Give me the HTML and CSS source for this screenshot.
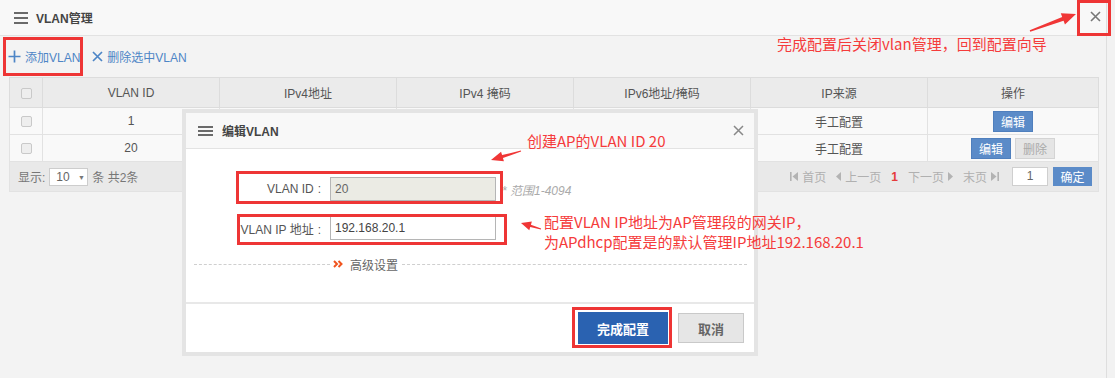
FILE: index.html
```html
<!DOCTYPE html>
<html lang="zh-CN">
<head>
    <meta charset="UTF-8">
    <title>VLAN管理</title>
    <link rel="stylesheet" href="styles.css">
</head>
<body>
    <div class="page">
        <div class="panel">
            <div class="panel-head">
                <span class="menu-icon"><i></i><i></i><i></i></span>
                <span class="panel-title">VLAN管理</span>
                <svg class="panel-close" width="11" height="11" viewBox="0 0 11 11"><path d="M1 1L10 10M10 1L1 10" stroke="#777" stroke-width="1.6"/></svg>
            </div>

            <div class="toolbar">
                <a class="tool-link">
                    <svg width="13" height="13" viewBox="0 0 13 13"><path d="M6.5 0.5V12.5M0.5 6.5H12.5" stroke="#4d85c6" stroke-width="1.7"/></svg>
                    添加VLAN
                </a>
                <a class="tool-link">
                    <svg width="11" height="11" viewBox="0 0 11 11"><path d="M1 1L10 10M10 1L1 10" stroke="#4d85c6" stroke-width="1.7"/></svg>
                    删除选中VLAN
                </a>
            </div>

            <table class="grid">
                <colgroup>
                    <col style="width:33px"><col style="width:177px"><col style="width:177px"><col style="width:177px">
                    <col style="width:177px"><col style="width:177px"><col style="width:171px">
                </colgroup>
                <thead>
                    <tr>
                        <th><span class="check"></span></th>
                        <th>VLAN ID</th>
                        <th>IPv4地址</th>
                        <th>IPv4 掩码</th>
                        <th>IPv6地址/掩码</th>
                        <th>IP来源</th>
                        <th>操作</th>
                    </tr>
                </thead>
                <tbody>
                    <tr>
                        <td><span class="check"></span></td>
                        <td>1</td><td></td><td></td><td></td>
                        <td>手工配置</td>
                        <td><button class="btn-edit">编辑</button></td>
                    </tr>
                    <tr>
                        <td><span class="check"></span></td>
                        <td>20</td><td></td><td></td><td></td>
                        <td>手工配置</td>
                        <td><button class="btn-edit">编辑</button><button class="btn-del">删除</button></td>
                    </tr>
                    <tr class="grid-foot">
                        <td colspan="7">
                            <div class="foot-bar">
                                <div class="page-size">
                                    显示:
                                    <span class="size-select">10 <b>▼</b></span>
                                    条 共2条
                                </div>
                                <div class="pager">
                                    <span class="pg"><svg width="8" height="9" viewBox="0 0 8 9"><rect x="0" y="0" width="1.6" height="9" fill="#b3b3b3"/><path d="M8 0V9L2.5 4.5Z" fill="#b3b3b3"/></svg>首页</span>
                                    <span class="pg"><svg width="5" height="9" viewBox="0 0 5 9"><path d="M5 0V9L0 4.5Z" fill="#b3b3b3"/></svg>上一页</span>
                                    <span class="pg-cur">1</span>
                                    <span class="pg">下一页<svg width="5" height="9" viewBox="0 0 5 9"><path d="M0 0V9L5 4.5Z" fill="#b3b3b3"/></svg></span>
                                    <span class="pg">末页<svg width="8" height="9" viewBox="0 0 8 9"><path d="M0 0V9L5.5 4.5Z" fill="#b3b3b3"/><rect x="6.4" y="0" width="1.6" height="9" fill="#b3b3b3"/></svg></span>
                                    <span class="pg-input">1</span>
                                    <button class="pg-go">确定</button>
                                </div>
                            </div>
                        </td>
                    </tr>
                </tbody>
            </table>
        </div>

        <div class="modal">
            <div class="modal-head">
                <span class="menu-icon small"><i></i><i></i><i></i></span>
                <span class="modal-title">编辑VLAN</span>
                <svg class="modal-close" width="11" height="11" viewBox="0 0 11 11"><path d="M1 1L10 10M10 1L1 10" stroke="#888" stroke-width="1.5"/></svg>
            </div>
            <div class="modal-body">
                <div class="form-row">
                    <label>VLAN ID<span class="colon">:</span></label>
                    <span class="field disabled">20</span>
                    <span class="hint">* 范围1-4094</span>
                </div>
                <div class="form-row second">
                    <label>VLAN IP 地址<span class="colon">:</span></label>
                    <span class="field">192.168.20.1</span>
                </div>
                <div class="more">
                    <span class="dash short"></span>
                    <span class="more-label">
                        <svg width="10" height="8" viewBox="0 0 10 8"><path d="M1 1L4 4L1 7M5.5 1L8.5 4L5.5 7" fill="none" stroke="#f0541e" stroke-width="2"/></svg>
                        高级设置
                    </span>
                    <span class="dash"></span>
                </div>
            </div>
            <div class="modal-foot">
                <button class="btn-primary">完成配置</button>
                <button class="btn-default">取消</button>
            </div>
        </div>

        <!-- annotations drawn over the screenshot -->
        <div class="mark mark-add"></div>
        <div class="mark mark-close"></div>
        <div class="mark mark-id"></div>
        <div class="mark mark-ip"></div>
        <div class="mark mark-done"></div>

        <div class="note note-id">创建AP的VLAN ID 20</div>
        <div class="note note-ip">配置VLAN IP地址为AP管理段的网关IP，<br>为APdhcp配置是的默认管理IP地址192.168.20.1</div>
        <div class="note note-close">完成配置后关闭vlan管理，回到配置向导</div>

        <svg class="arrows" width="1115" height="378" viewBox="0 0 1115 378">
            <polygon points="520.86,150.52 502.07,155.11 501.06,151.76 491,160 503.94,161.34 502.93,157.99 521.14,151.48" fill="#f03636"/>
            <polygon points="541.14,228.52 530.92,224.72 531.87,221.56 521,223 529.29,230.18 530.24,227.02 540.86,229.48" fill="#f03636"/>
            <polygon points="1029.76,30.34 1062.18,16.97 1060.79,13.22 1076,14 1064.95,24.48 1063.56,20.73 1030.24,31.66" fill="#f03636"/>
        </svg>
    </div>
</body>
</html>
```

FILE: styles.css
```css
body {
    margin: 0;
    background: #f2f2f2;
    font-family: "Liberation Sans", "Noto Sans CJK SC", sans-serif;
    font-size: 12px;
    color: #555;
}

.page {
    position: relative;
    width: 1115px;
    height: 378px;
    overflow: hidden;
}

.panel {
    width: 1106px;
    height: 378px;
    border-right: 1px solid #dedede;
    background: #f3f3f3;
}

.panel-head {
    height: 35px;
    border-bottom: 1px solid #e2e2e2;
    background: #f8f8f8;
    display: flex;
    align-items: center;
    padding-left: 14px;
}

.menu-icon {
    display: flex;
    flex-direction: column;
    gap: 3px;
    width: 14px;
    margin-right: 8px;
}

.menu-icon i {
    display: block;
    height: 2px;
    background: #6a6a6a;
}

.menu-icon.small {
    width: 15px;
    gap: 2px;
    margin-right: 9px;
}

.panel-title {
    font-weight: bold;
    color: #444;
}

.panel-close {
    margin-left: auto;
    margin-right: 5px;
    margin-top: -3px;
}

.toolbar {
    height: 41px;
    display: flex;
    align-items: center;
    padding-left: 8px;
    gap: 12px;
}

.tool-link {
    display: flex;
    align-items: center;
    gap: 4px;
    color: #4d85c6;
}

.grid {
    margin-left: 9px;
    width: 1089px;
    border-collapse: collapse;
    table-layout: fixed;
}

.grid th {
    height: 29px;
    background: #ebebeb;
    border: 1px solid #dcdcdc;
    font-weight: normal;
    color: #555;
    padding: 0;
}

.grid td {
    height: 26px;
    background: #f9f9f9;
    border: 1px solid #e2e2e2;
    text-align: center;
    padding: 0;
}

.check {
    display: inline-block;
    width: 9px;
    height: 9px;
    border: 1px solid #c9c9c9;
    border-radius: 2px;
    background: #eeeeee;
    vertical-align: middle;
}

.btn-edit, .btn-del {
    height: 21px;
    padding: 0 7px;
    font-family: inherit;
    font-size: 12px;
    vertical-align: middle;
}

.btn-edit {
    background: #5b8bc8;
    border: 1px solid #4f7fbd;
    color: #fff;
}

.btn-del {
    margin-left: 4px;
    background: #e5e5e5;
    border: 1px solid #d4d4d4;
    color: #aaa;
}

.grid .grid-foot td {
    height: 29px;
    background: #e9e9e9;
    padding: 0 6px 0 8px;
}

.foot-bar {
    display: flex;
    justify-content: space-between;
    align-items: center;
}

.page-size {
    display: flex;
    align-items: center;
    gap: 4px;
    color: #777;
}

.size-select {
    width: 31px;
    height: 16px;
    line-height: 16px;
    padding-left: 6px;
    border: 1px solid #cdcdcd;
    background: #fff;
    text-align: left;
    color: #666;
}

.size-select b {
    font-size: 7px;
    color: #777;
    margin-left: 5px;
    vertical-align: 1px;
}

.pager {
    display: flex;
    align-items: center;
    color: #b0b0b0;
}

.pg {
    display: flex;
    align-items: center;
    gap: 4px;
    margin-right: 10px;
}

.pg-cur {
    color: #e53b3b;
    font-weight: bold;
    margin-right: 10px;
}

.pg-input {
    width: 34px;
    height: 17px;
    line-height: 17px;
    border: 1px solid #cfcfcf;
    background: #fff;
    color: #666;
    text-align: center;
    margin-left: 3px;
    margin-right: 5px;
}

.pg-go {
    width: 39px;
    height: 19px;
    border: none;
    background: #5b8bc8;
    color: #fff;
    font-family: inherit;
    font-size: 12px;
    padding: 0;
}

.modal {
    position: absolute;
    left: 182px;
    top: 109px;
    width: 568px;
    border: 4px solid #e4e4e4;
    background: #fff;
}

.modal-head {
    height: 35px;
    border-bottom: 1px solid #e3e3e3;
    background: #f8f8f8;
    display: flex;
    align-items: center;
    padding-left: 12px;
}

.modal-title {
    font-weight: bold;
    color: #444;
}

.modal-close {
    margin-left: auto;
    margin-right: 10px;
}

.modal-body {
    height: 153px;
    box-sizing: border-box;
    padding-top: 28px;
}

.form-row {
    display: flex;
    align-items: center;
    height: 24px;
}

.form-row.second {
    margin-top: 15px;
}

.form-row label {
    width: 135px;
    padding-right: 2px;
    text-align: right;
    color: #555;
    white-space: nowrap;
}

.colon {
    margin-left: 4px;
}

.field {
    margin-left: 7px;
    width: 160px;
    height: 22px;
    line-height: 22px;
    padding-left: 4px;
    border: 1px solid #b5b5b5;
    color: #444;
}

.field.disabled {
    background: #ebebe4;
    color: #666;
}

.hint {
    margin-left: 6px;
    font-style: italic;
    color: #aaa;
}

.more {
    display: flex;
    align-items: center;
    margin: 17px 7px 0 8px;
    height: 14px;
}

.dash {
    flex: 1;
    border-top: 1px dashed #cfcfcf;
}

.dash.short {
    flex: 0 0 136px;
}

.more-label {
    display: flex;
    align-items: center;
    gap: 7px;
    padding: 0 4px 0 3px;
    color: #666;
}

.modal-foot {
    height: 48px;
    border-top: 2px solid #e8e8e8;
    display: flex;
    justify-content: flex-end;
    align-items: center;
    gap: 10px;
    padding-right: 10px;
}

.btn-primary, .btn-default {
    font-family: inherit;
    font-size: 13px;
    font-weight: bold;
    padding: 0;
}

.btn-primary {
    width: 90px;
    height: 32px;
    border: none;
    background: #2a62b1;
    color: #fff;
}

.btn-default {
    width: 66px;
    height: 30px;
    border: 1px solid #c9c9c9;
    background: #e6e6e6;
    color: #666;
}

.mark {
    position: absolute;
    box-sizing: border-box;
    border: 3px solid #ee3535;
}

.mark-add { left: 3px; top: 37px; width: 80px; height: 39px; }
.mark-close { left: 1077px; top: 0; width: 34px; height: 36px; }
.mark-id { left: 236px; top: 171px; width: 267px; height: 33px; }
.mark-ip { left: 237px; top: 214px; width: 270px; height: 31px; }
.mark-done { left: 572px; top: 307px; width: 100px; height: 41px; }

.note {
    position: absolute;
    color: #f53b3b;
    font-family: "Noto Sans CJK SC", sans-serif;
    font-size: 15px;
    line-height: 20px;
    white-space: nowrap;
}

.note-id { left: 527px; top: 131px; }
.note-ip { left: 544px; top: 212px; }
.note-close { left: 777px; top: 34px; }

.arrows {
    position: absolute;
    left: 0;
    top: 0;
    pointer-events: none;
}
```
